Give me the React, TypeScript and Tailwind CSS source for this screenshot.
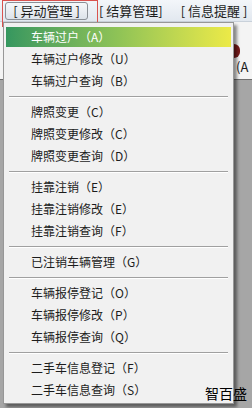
import React from "react";

type Entry = { label: string; key: string } | "sep";

const entries: Entry[] = [
  { label: "车辆过户", key: "A" },
  { label: "车辆过户修改", key: "U" },
  { label: "车辆过户查询", key: "B" },
  "sep",
  { label: "牌照变更", key: "C" },
  { label: "牌照变更修改", key: "C" },
  { label: "牌照变更查询", key: "D" },
  "sep",
  { label: "挂靠注销", key: "E" },
  { label: "挂靠注销修改", key: "E" },
  { label: "挂靠注销查询", key: "F" },
  "sep",
  { label: "已注销车辆管理", key: "G" },
  "sep",
  { label: "车辆报停登记", key: "O" },
  { label: "车辆报停修改", key: "P" },
  { label: "车辆报停查询", key: "Q" },
  "sep",
  { label: "二手车信息登记", key: "F" },
  { label: "二手车信息查询", key: "S" },
];

const font = { fontFamily: '"Microsoft YaHei", "Noto Sans CJK SC", "Noto Sans", sans-serif' };

export default function App() {
  return (
    <div
      className="relative w-[252px] h-[408px] overflow-hidden bg-[#a6a6a6] text-[12px] text-[#1c1c1c]"
      style={font}
    >
      {/* top bar */}
      <div className="h-[22px] bg-gradient-to-b from-[#f3f6fa] to-[#e2e8ef] flex items-center border-b border-[#c9d1da]">
        <div className="ml-[5px] h-[18px] w-[83px] rounded-[3px] border border-[#8a8f96] bg-gradient-to-b from-[#f6f8fa] to-[#dde3ea] flex items-center justify-center text-[13px] leading-none">
          [ 异动管理 ]
        </div>
        <div className="ml-[11px] text-[13px] leading-none">[ 结算管理]</div>
        <div className="ml-[18px] text-[13px] leading-none">[ 信息提醒 ]</div>
      </div>

      {/* content strip behind menu */}
      <div className="h-[58px] bg-[#f4f4f4] border-b border-[#6e6e6e] flex justify-end">
        <div className="relative w-[18px]">
          <div className="absolute left-[0px] top-[22px] w-[6px] h-[14px] bg-[#7a1c1c] rounded-r-full" />
          <div className="absolute left-[2px] top-[38px] text-[13px] leading-none">(A</div>
        </div>
      </div>

      {/* red focus rectangle */}
      <div className="absolute left-[2px] top-0 w-[96px] h-[27px] border border-[#d9534f] pointer-events-none" />

      {/* dropdown menu */}
      <div className="absolute left-[3px] top-[22px] w-[231px] bg-[#f1f1f1] border border-[#979797] pt-[3px] pb-[2px] px-[2px] shadow-[3px_3px_3px_rgba(0,0,0,0.45)]">
        {entries.map((e, i) =>
          e === "sep" ? (
            <div key={i} className="h-[9px] flex flex-col justify-center px-[3px]">
              <div className="h-px bg-[#a0a0a0]" />
              <div className="h-px bg-white" />
            </div>
          ) : (
            <div key={i} className="h-[22px] flex items-stretch py-px">
              <div
                className={
                  i === 0
                    ? "flex-1 flex items-center pl-[25px] bg-gradient-to-r from-[#35975f] via-[#8fc356] to-[#ecea47] text-white"
                    : "flex-1 flex items-center pl-[25px]"
                }
              >
                {e.label}（{e.key}）
              </div>
            </div>
          )
        )}
      </div>

      {/* watermark */}
      <div className="absolute right-[5px] bottom-[8px] text-[14px] leading-none text-black">智百盛</div>
    </div>
  );
}
